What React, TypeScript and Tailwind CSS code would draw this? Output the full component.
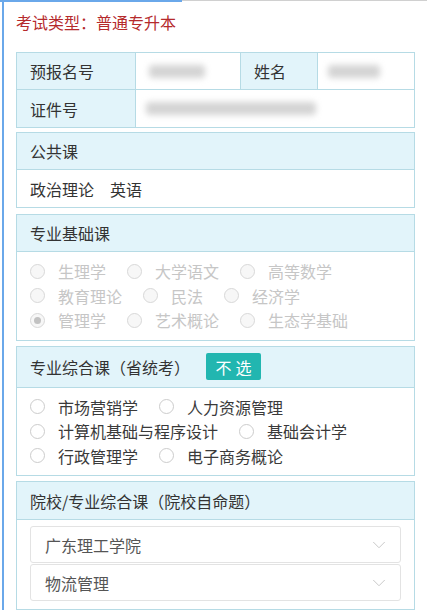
import { ChevronDown } from 'lucide-react';

const font = { fontFamily: '"Noto Sans CJK SC", "Noto Sans", sans-serif' };

interface Opt {
  label: string;
  checked?: boolean;
}

const basic: Opt[][] = [
  [{ label: '生理学' }, { label: '大学语文' }, { label: '高等数学' }],
  [{ label: '教育理论' }, { label: '民法' }, { label: '经济学' }],
  [{ label: '管理学', checked: true }, { label: '艺术概论' }, { label: '生态学基础' }],
];

const unified: Opt[][] = [
  [{ label: '市场营销学' }, { label: '人力资源管理' }],
  [{ label: '计算机基础与程序设计' }, { label: '基础会计学' }],
  [{ label: '行政管理学' }, { label: '电子商务概论' }],
];

function Radio({ opt, disabled }: { opt: Opt; disabled?: boolean }) {
  return (
    <div className="flex items-center mr-[21px]">
      <span
        className={`w-[15px] h-[15px] rounded-full border flex items-center justify-center ${
          disabled ? 'border-[#d8d8d8] bg-[#f7f7f7]' : 'border-[#cccccc] bg-white'
        }`}
      >
        {opt.checked && <span className="w-[7px] h-[7px] rounded-full bg-[#c2c2c2]" />}
      </span>
      <span className={`ml-[13px] ${disabled ? 'text-[#c6c6c6]' : 'text-[#3a3a3a]'}`}>{opt.label}</span>
    </div>
  );
}

function RadioGroup({ rows, disabled }: { rows: Opt[][]; disabled?: boolean }) {
  return (
    <div className="px-[13px] py-[7px]">
      {rows.map((row, i) => (
        <div key={i} className="flex items-center h-[24.5px]">
          {row.map(o => (
            <Radio key={o.label} opt={o} disabled={disabled} />
          ))}
        </div>
      ))}
    </div>
  );
}

function Blur({ w }: { w: number }) {
  return <div className="h-[13px] bg-[#d4d4d4] blur-[3px] rounded-sm" style={{ width: w }} />;
}

function Select({ value }: { value: string }) {
  return (
    <div className="h-[37px] border border-[#e3e3e3] rounded-[3px] bg-white flex items-center justify-between pl-[14px] pr-[10px] text-[#555]">
      <span>{value}</span>
      <ChevronDown className="w-[22px] h-[22px] text-[#c4c4c4]" strokeWidth={1} />
    </div>
  );
}

export default function App() {
  return (
    <div className="w-[427px] h-[610px] bg-white text-[16px] text-[#333] overflow-hidden" style={font}>
      <div className="flex h-[2px]">
        <div className="w-[182px] bg-[#6aa8ea]" />
        <div className="flex-1 border-t border-[#d0d0d0]" />
      </div>
      <div className="ml-[2px] border-l-2 border-[#6aa8ea] pl-[12px] pr-[12px] h-[608px]">
        <div className="pt-[9px] h-[50px] text-[#b52a2c] leading-[22px]">考试类型：普通专升本</div>

        <div className="border border-[#b6dbe5] text-[#333]">
          <div className="flex h-[37px] border-b border-[#b6dbe5]">
            <div className="w-[119px] bg-[#e2f4fa] border-r border-[#b6dbe5] flex items-center pl-[13px]">预报名号</div>
            <div className="w-[105px] border-r border-[#b6dbe5] flex items-center pl-[13px]">
              <Blur w={56} />
            </div>
            <div className="w-[77px] bg-[#e2f4fa] border-r border-[#b6dbe5] flex items-center pl-[13px]">姓名</div>
            <div className="flex-1 flex items-center pl-[10px]">
              <Blur w={52} />
            </div>
          </div>
          <div className="flex h-[37px]">
            <div className="w-[119px] bg-[#e2f4fa] border-r border-[#b6dbe5] flex items-center pl-[13px]">证件号</div>
            <div className="flex-1 flex items-center pl-[10px]">
              <Blur w={170} />
            </div>
          </div>
        </div>

        <div className="mt-[4px] border border-[#b6dbe5]">
          <div className="h-[37px] bg-[#e2f4fa] border-b border-[#b6dbe5] flex items-center pl-[13px]">公共课</div>
          <div className="h-[37px] flex items-center pl-[13px]">
            <span className="mr-[16px]">政治理论</span>
            <span>英语</span>
          </div>
        </div>

        <div className="mt-[6px] border border-[#b6dbe5]">
          <div className="h-[37px] bg-[#e2f4fa] border-b border-[#b6dbe5] flex items-center pl-[13px]">专业基础课</div>
          <RadioGroup rows={basic} disabled />
        </div>

        <div className="mt-[5px] border border-[#b6dbe5]">
          <div className="h-[41px] bg-[#e2f4fa] border-b border-[#b6dbe5] flex items-center pl-[13px]">
            <span>专业综合课（省统考）</span>
            <span className="ml-[16px] w-[55px] h-[27px] bg-[#22b6b0] text-white rounded-[2px] flex items-center justify-center tracking-[4px] pl-[4px]">
              不选
            </span>
          </div>
          <RadioGroup rows={unified} />
        </div>

        <div className="mt-[5px] border border-[#b6dbe5]">
          <div className="h-[38px] bg-[#e2f4fa] border-b border-[#b6dbe5] flex items-center pl-[13px]">
            院校/专业综合课（院校自命题）
          </div>
          <div className="pl-[13px] pr-[13px] pt-[6px] pb-[8px] flex flex-col gap-[1px]">
            <Select value="广东理工学院" />
            <Select value="物流管理" />
          </div>
        </div>
      </div>
    </div>
  );
}
